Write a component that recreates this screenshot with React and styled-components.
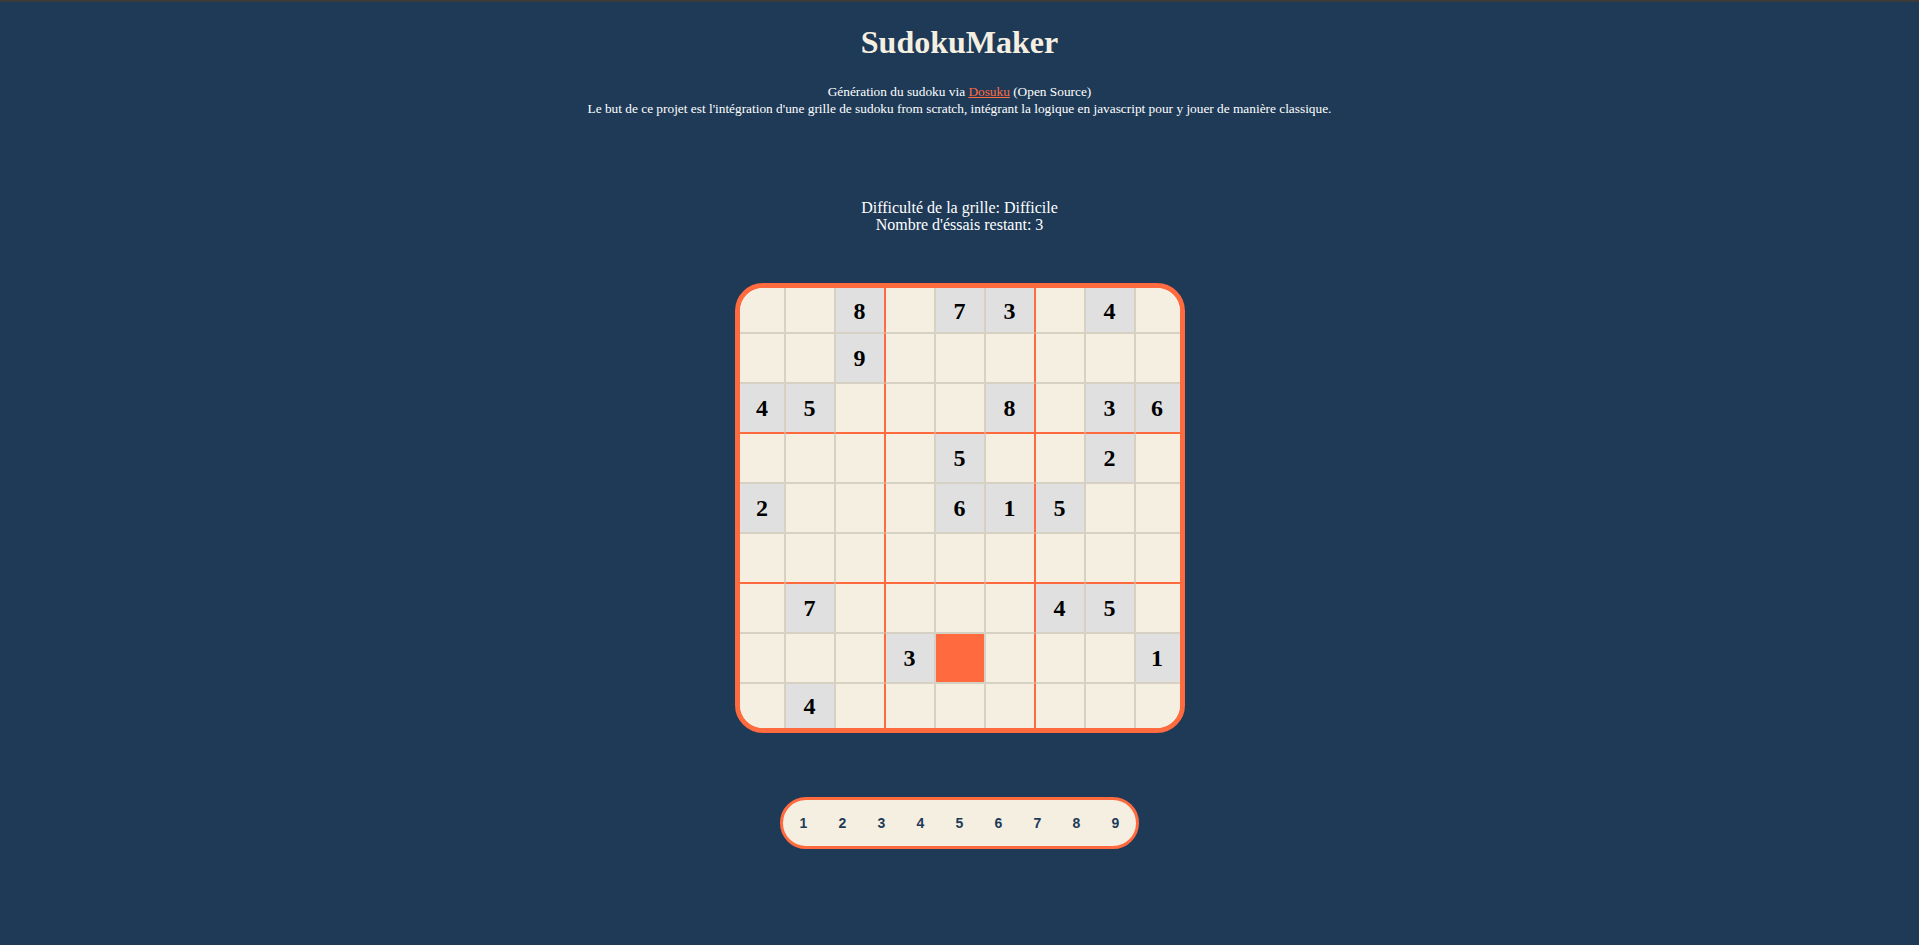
import React from "react";
import styled, { createGlobalStyle } from "styled-components";

const NAVY = "#1e3a57";
const CREAM = "#f5efe2";
const ORANGE = "#ff6b3f";
const LINE = "#d6d1c3";
const GIVEN = "#e0e0e0";

const GlobalStyle = createGlobalStyle`
  html, body {
    margin: 0;
    padding: 0;
    background: ${NAVY};
  }
  body {
    min-height: 100vh;
    box-sizing: border-box;
    border-top: 2px solid #3b3b3b;
    font-family: "Liberation Serif", "Times New Roman", serif;
    color: ${CREAM};
  }
`;

const Page = styled.main`
  display: flex;
  flex-direction: column;
  align-items: center;
  text-align: center;
  padding-bottom: 60px;
`;

const Title = styled.h1`
  margin: 22px 0 0;
  font-size: 32px;
  line-height: 37px;
  font-weight: bold;
  color: ${CREAM};
`;

const Intro = styled.div`
  margin-top: 22px;
  font-size: 13.33px;
  line-height: 17px;
  color: #ffffff;
`;

const Link = styled.a`
  color: ${ORANGE};
  text-decoration: underline;
`;

const Status = styled.div`
  margin-top: 82px;
  font-size: 16px;
  line-height: 17px;
  color: #ffffff;
`;

const Frame = styled.div`
  margin-top: 50px;
  width: 440px;
  height: 440px;
  border: 5px solid ${ORANGE};
  border-radius: 28px;
  overflow: hidden;
  background: ${CREAM};
`;

const Board = styled.div`
  margin: -5px;
  width: 450px;
  height: 450px;
  display: grid;
  grid-template-columns: repeat(9, 50px);
  grid-template-rows: repeat(9, 50px);
`;

const Cell = styled.div`
  box-sizing: border-box;
  border: 1px solid ${LINE};
  border-right-color: ${(p) => (p.$col === 2 || p.$col === 5 ? ORANGE : LINE)};
  border-left-color: ${(p) => (p.$col === 3 || p.$col === 6 ? ORANGE : LINE)};
  border-bottom-color: ${(p) => (p.$row === 2 || p.$row === 5 ? ORANGE : LINE)};
  border-top-color: ${(p) => (p.$row === 3 || p.$row === 6 ? ORANGE : LINE)};
  padding-top: ${(p) => (p.$row === 0 ? 6 : 1)}px;
  padding-bottom: ${(p) => (p.$row === 8 ? 5 : 0)}px;
  padding-left: ${(p) => (p.$col === 0 ? 5 : 0)}px;
  padding-right: ${(p) => (p.$col === 8 ? 5 : 0)}px;
  background: ${(p) => (p.$selected ? ORANGE : p.$given ? GIVEN : CREAM)};
  display: flex;
  align-items: center;
  justify-content: center;
  font-family: "Liberation Serif", "Times New Roman", serif;
  font-weight: bold;
  font-size: 24px;
  color: #000;
`;

const Palette = styled.div`
  margin-top: 64px;
  display: flex;
  padding: 0 1px;
  height: 46px;
  border: 3px solid ${ORANGE};
  border-radius: 30px;
  background: ${CREAM};
`;

const NumButton = styled.button`
  width: 39px;
  height: 46px;
  border: none;
  background: transparent;
  padding: 0;
  font-family: "Liberation Sans", Arial, sans-serif;
  font-size: 14px;
  font-weight: bold;
  color: ${NAVY};
  cursor: pointer;
`;

const puzzle = [
  "..8.73.4.",
  "..9......",
  "45...8.36",
  "....5..2.",
  "2...615..",
  ".........",
  ".7....45.",
  "...3....1",
  ".4.......",
];

const selected = { r: 7, c: 4 };

export default function App() {
  return (
    <>
      <GlobalStyle />
      <Page>
        <Title>SudokuMaker</Title>
        <Intro>
          <div>
            Génération du sudoku via <Link href="#">Dosuku</Link> (Open Source)
          </div>
          <div>
            Le but de ce projet est l'intégration d'une grille de sudoku from scratch, intégrant la
            logique en javascript pour y jouer de manière classique.
          </div>
        </Intro>
        <Status>
          <div>Difficulté de la grille: Difficile</div>
          <div>Nombre d'éssais restant: 3</div>
        </Status>
        <Frame>
          <Board>
            {puzzle.map((row, r) =>
              row.split("").map((ch, c) => (
                <Cell
                  key={`${r}-${c}`}
                  $row={r}
                  $col={c}
                  $given={ch !== "."}
                  $selected={r === selected.r && c === selected.c}
                >
                  {ch !== "." ? ch : ""}
                </Cell>
              ))
            )}
          </Board>
        </Frame>
        <Palette>
          {[1, 2, 3, 4, 5, 6, 7, 8, 9].map((n) => (
            <NumButton key={n}>{n}</NumButton>
          ))}
        </Palette>
      </Page>
    </>
  );
}
